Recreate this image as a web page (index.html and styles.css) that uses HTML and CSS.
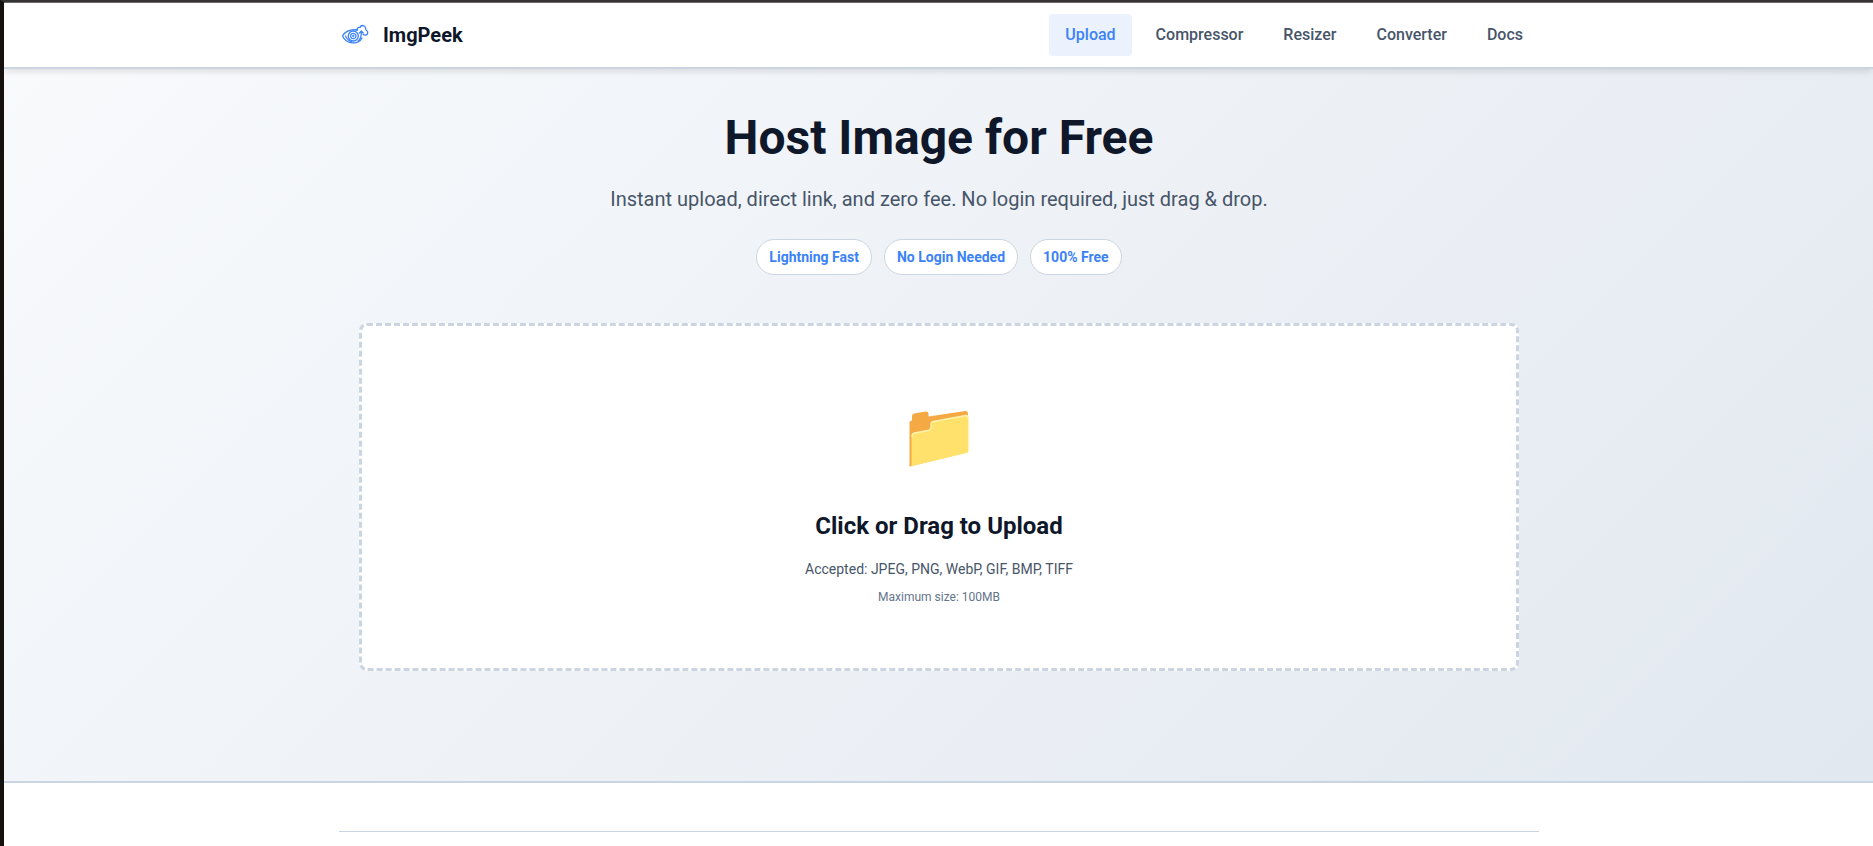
FILE: index.html
```html
<!DOCTYPE html>
<html lang="en">
  <head>
    <meta charset="UTF-8" />
    <meta name="viewport" content="width=device-width, initial-scale=1.0" />
    <title>ImgPeek</title>
    <link rel="stylesheet" href="styles.css">
  </head>
  <body>
    <header class="header">
      <div class="container header-inner">
        <a href="#" class="logo">
          <svg class="logo-icon" viewBox="0 0 32 32" fill="none" stroke="#3b82f6" stroke-width="1.3" stroke-linecap="round" stroke-linejoin="round">
            <path d="M3.500 17C6.500 12 11 10 18.500 11M3.500 17C7 25 19 26.500 23 19" />
            <path d="M18 11C18 9 19.500 8 21 8.500C22 5.500 26 6 26.500 9C26.500 10.500 27 11 27.500 11.500C29.500 12.500 29 15.500 27 16C25.500 16.500 24.500 15.800 24 15.200" />
            <path d="M19 22C22 20 22.500 17 22.300 12.500M20.500 14L22.300 12L24.200 14" />
            <path d="M6.500 17C8 20 10 22 13 22.800" />
            <circle cx="14.300" cy="17" r="5" />
            <circle cx="14.300" cy="17" r="2.700" stroke-dasharray="3 1" />
            <circle cx="14.300" cy="17" r="0.500" />
          </svg>
          <span class="logo-text">ImgPeek</span>
        </a>
        <nav class="nav">
          <a href="#" class="nav-link active">Upload</a>
          <a href="#" class="nav-link">Compressor</a>
          <a href="#" class="nav-link">Resizer</a>
          <a href="#" class="nav-link">Converter</a>
          <a href="#" class="nav-link">Docs</a>
        </nav>
      </div>
    </header>

    <section class="hero">
      <h1>Host Image for Free</h1>
      <p class="subtitle">Instant upload, direct link, and zero fee. No login required, just drag &amp; drop.</p>
      <div class="badges">
        <span class="badge">Lightning Fast</span>
        <span class="badge">No Login Needed</span>
        <span class="badge">100% Free</span>
      </div>
      <div class="upload-zone">
        <svg class="folder" viewBox="0 0 64 64">
          <path fill="#f4a944" d="M2.500 14.500L5 13.500V9Q5 7 7 6.500L19 4.500Q21.500 4.500 21.500 6.500V9.500L58.500 4Q61 4 61 7V45L2.500 59.500Z" />
          <path fill="#ffe16c" d="M4.500 59.300V29Q4.500 26.500 7 26L21 23.500Q24 23 24 20V17.500Q24 15 26.500 14.500L59 8.500Q61.500 8.500 61.500 11V43.500Q61.500 45.500 59.500 46Z" />
          <path fill="none" stroke="#fff3b0" stroke-width="1.300" d="M5 30V29Q5 26.500 7.500 26L21 23.500Q24 23 24 20V17.500Q24 15 26.500 14.500L59 8.500Q61 8.500 61 11" />
        </svg>
        <h2>Click or Drag to Upload</h2>
        <p class="formats">Accepted: JPEG, PNG, WebP, GIF, BMP, TIFF</p>
        <p class="max-size">Maximum size: 100MB</p>
      </div>
    </section>

    <main class="content">
      <hr class="container" />
    </main>
  </body>
</html>
```

FILE: styles.css
```css
* {
  margin: 0;
  padding: 0;
  box-sizing: border-box;
}
body {
  height: 846px;
  border-top: 2px solid #353333;
  border-left: 4px solid #14110f;
  background: #fff;
  color: #0f172a;
  font-family: Roboto, sans-serif;
  font-size: 16px;
  line-height: 1.6;
  overflow: hidden;
}
a {
  text-decoration: none;
}
.container {
  width: 1200px;
  margin: 0 auto;
}
.header {
  position: relative;
  height: 67px;
  padding-left: 1px;
  background: #fff;
  border-top: 1px solid #6b6969;
  border-bottom: 2px solid #cbd5e1;
  box-shadow: 0 4px 6px -1px rgba(0, 0, 0, 0.1);
}
.header-inner {
  display: flex;
  align-items: center;
  justify-content: space-between;
  height: 64px;
}
.logo {
  display: flex;
  align-items: center;
  gap: 12px;
}
.logo-icon {
  width: 32px;
  height: 32px;
}
.logo-text {
  color: #0f172a;
  font-size: 20px;
  font-weight: 700;
}
.nav {
  display: flex;
  gap: 8px;
}
.nav-link {
  padding: 8px 16px;
  border-radius: 4px;
  color: #475569;
  font-weight: 500;
}
.nav-link.active {
  background: #ebf2fe;
  color: #3b82f6;
}
.hero {
  height: 714px;
  padding: 40px 0 0 1px;
  border-bottom: 2px solid #cbd5e1;
  background: linear-gradient(135deg, #f8fafc 0%, #e2e8f0 100%);
  text-align: center;
}
.hero h1 {
  font-size: 48px;
  font-weight: 700;
  line-height: 1.2;
}
.subtitle {
  margin-top: 16px;
  color: #475569;
  font-size: 20px;
}
.badges {
  display: flex;
  justify-content: center;
  gap: 12px;
  margin-top: 24px;
}
.badge {
  padding: 6px 12px;
  border: 1px solid #cbd5e1;
  border-radius: 20px;
  background: #fff;
  color: #3b82f6;
  font-size: 14px;
  font-weight: 700;
}
.upload-zone {
  display: flex;
  flex-direction: column;
  align-items: center;
  width: 1160px;
  height: 348px;
  margin: 48px auto 0;
  padding-top: 81px;
  border: 3px dashed #cbd5e1;
  border-radius: 8px;
  background: #fff;
}
.folder {
  width: 64px;
  height: 64px;
}
.upload-zone h2 {
  margin-top: 36px;
  font-size: 24px;
  font-weight: 700;
}
.formats {
  margin-top: 13px;
  color: #475569;
  font-size: 14px;
}
.max-size {
  margin-top: 7px;
  color: #64748b;
  font-size: 12px;
}
.content {
  padding: 48px 0 0 1px;
}
.content hr {
  border: none;
  border-top: 1px solid #cbd5e1;
}
```
